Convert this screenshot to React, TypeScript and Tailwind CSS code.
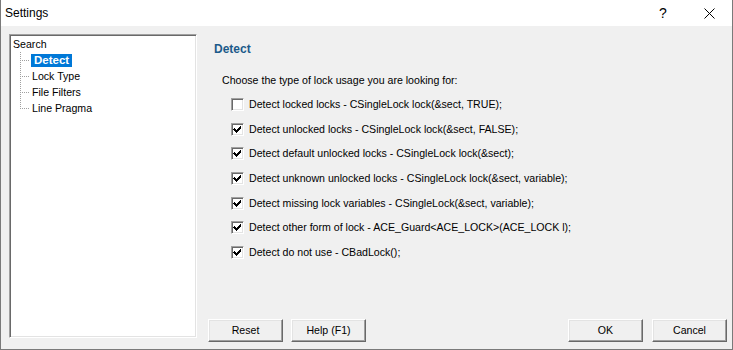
import React from "react";

const font = { fontFamily: '"Liberation Sans", Arial, sans-serif' };

const options = [
  { label: "Detect locked locks - CSingleLock lock(&sect, TRUE);", checked: false },
  { label: "Detect unlocked locks - CSingleLock lock(&sect, FALSE);", checked: true },
  { label: "Detect default unlocked locks - CSingleLock lock(&sect);", checked: true },
  { label: "Detect unknown unlocked locks - CSingleLock lock(&sect, variable);", checked: true },
  { label: "Detect missing lock variables - CSingleLock(&sect, variable);", checked: true },
  { label: "Detect other form of lock - ACE_Guard<ACE_LOCK>(ACE_LOCK l);", checked: true },
  { label: "Detect do not use - CBadLock();", checked: true },
];

const treeItems = ["Detect", "Lock Type", "File Filters", "Line Pragma"];

function Checkbox({ checked }: { checked: boolean }) {
  return (
    <div className="w-[13px] h-[13px] shrink-0 bg-white border border-t-[#a0a0a0] border-l-[#a0a0a0] border-r-white border-b-white shadow-[inset_1px_1px_0_#696969,inset_-1px_-1px_0_#e3e3e3] relative">
      {checked && (
        <svg width="11" height="11" viewBox="0 0 11 11" className="absolute left-0 top-0" shapeRendering="crispEdges">
          <path d="M2 4h1v1h1v1h1v-1h1v-1h1v-1h1v-1h1v3h-1v1h-1v1h-1v1h-1v1h-1v-1h-1v-1h-1v-1h-1z" fill="#000" />
        </svg>
      )}
    </div>
  );
}

function Button({ children }: { children: React.ReactNode }) {
  return (
    <button className="w-[75px] h-[23px] bg-[#f0f0f0] border border-t-white border-l-white border-r-[#696969] border-b-[#696969] shadow-[inset_-1px_-1px_0_#a0a0a0,inset_1px_1px_0_#e3e3e3] text-[10.6px] text-black leading-none">
      {children}
    </button>
  );
}

function TreeConnector({ last }: { last: boolean }) {
  return (
    <svg width="11" height="16" className="shrink-0">
      <line x1="0.5" y1="0" x2="0.5" y2={last ? 9 : 16} stroke="#a0a0a0" strokeDasharray="1 1" />
      <line x1="2" y1="8.5" x2="10" y2="8.5" stroke="#a0a0a0" strokeDasharray="1 1" />
    </svg>
  );
}

export default function App() {
  return (
    <div className="w-[733px] h-[350px] flex flex-col bg-[#f0f0f0] border-x border-b border-[#7a7a7a] text-black" style={font}>
      <div className="h-[26px] bg-white flex items-center shrink-0">
        <span className="pl-[4px] text-[12px] flex-1">Settings</span>
        <div className="w-[46px] h-full flex items-center justify-center text-[14px]">?</div>
        <div className="w-[46px] h-full flex items-center justify-center">
          <svg width="11" height="11" viewBox="0 0 11 11">
            <path d="M0.5 0.5L10.5 10.5M10.5 0.5L0.5 10.5" stroke="#000" strokeWidth="1" />
          </svg>
        </div>
      </div>

      <div className="flex flex-1 min-h-0">
        <div className="ml-[8px] mt-[8px] w-[188px] h-[304px] bg-white border border-t-[#a0a0a0] border-l-[#a0a0a0] border-r-white border-b-white shadow-[inset_1px_1px_0_#696969,inset_-1px_-1px_0_#e3e3e3] text-[10.6px] pt-[1px]">
          <div className="h-[16px] leading-[16px] pl-[3px]">Search</div>
          <div className="pl-[10px]">
            {treeItems.map((item, i) => (
              <div key={item} className="flex items-center h-[16px]">
                <TreeConnector last={i === treeItems.length - 1} />
                {i === 0 ? (
                  <span className="bg-[#0078d7] text-white font-bold text-[11.5px] px-[3px] leading-[13px]">{item}</span>
                ) : (
                  <span className="pl-[1px] leading-[13px]">{item}</span>
                )}
              </div>
            ))}
          </div>
        </div>

        <div className="flex-1 flex flex-col justify-between pb-[7px] pr-[5px]">
          <div className="pl-[17px] pt-[16px]">
            <div className="text-[12px] font-bold text-[#1c5a8a] leading-[15px]">Detect</div>
            <div className="ml-[8px] mt-[17px] text-[10.6px] leading-[13px]">Choose the type of lock usage you are looking for:</div>
            <div className="ml-[17px] mt-[11px] flex flex-col gap-[11.7px]">
              {options.map((o) => (
                <div key={o.label} className="flex items-center gap-[5px] h-[13px]">
                  <Checkbox checked={o.checked} />
                  <span className="text-[10.6px] leading-[13px] whitespace-nowrap">{o.label}</span>
                </div>
              ))}
            </div>
          </div>

          <div className="flex items-center pl-[11px]">
            <div className="flex gap-[8px]">
              <Button>Reset</Button>
              <Button>Help (F1)</Button>
            </div>
            <div className="flex gap-[9px] ml-auto">
              <Button>OK</Button>
              <Button>Cancel</Button>
            </div>
          </div>
        </div>
      </div>
    </div>
  );
}
